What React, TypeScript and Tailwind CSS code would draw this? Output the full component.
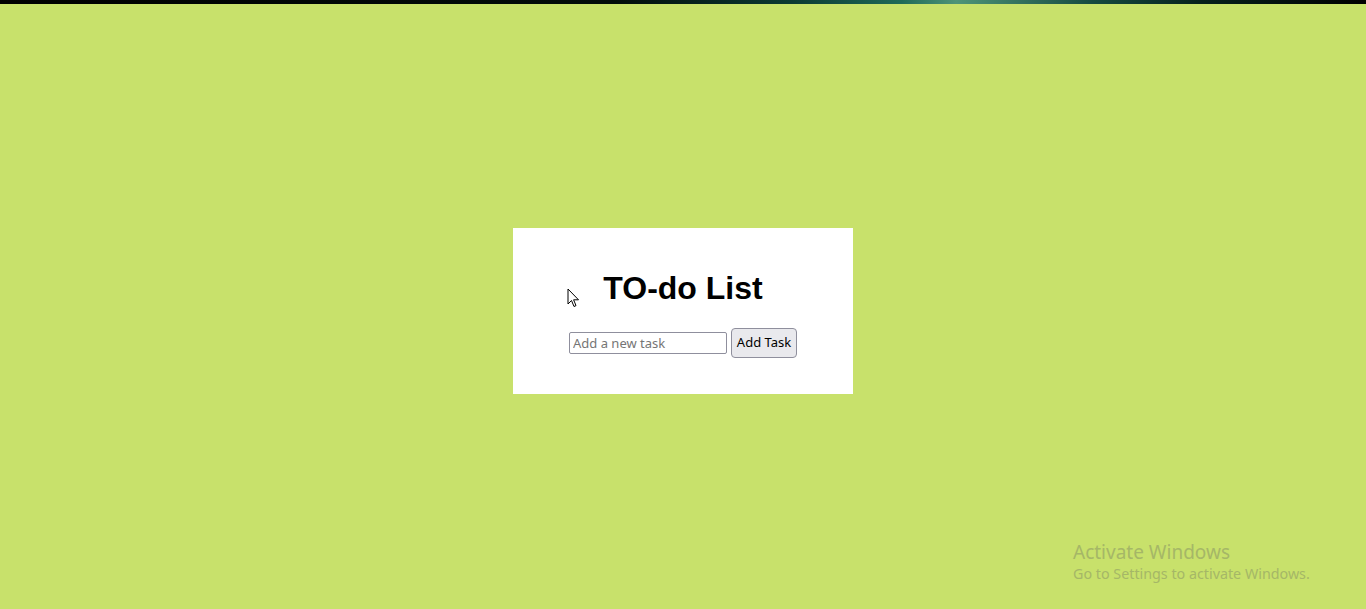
import { useState } from "react";

// Mouse pointer captured in the screenshot
const Pointer = () => (
  <svg width="13" height="20" viewBox="0 0 13 20" className="absolute left-[567px] top-[288px]">
    <path d="M1 1 L1 16 L4.5 12.5 L7 18.5 L9 17.6 L6.6 11.8 L11.5 11.8 Z" fill="#fff" stroke="#000" strokeWidth="1" strokeLinejoin="round" />
  </svg>
);

const App = () => {
  const [task, setTask] = useState("");
  const [tasks, setTasks] = useState<string[]>([]);

  const addTask = () => {
    if (!task.trim()) return;
    setTasks([...tasks, task.trim()]);
    setTask("");
  };

  return (
    <div className="relative flex h-[609px] w-full flex-col overflow-hidden bg-[#c8e16b] font-['Liberation_Sans',Arial,sans-serif]">
      {/* dark strip at the top of the page */}
      <div className="h-1 w-full bg-[linear-gradient(90deg,#000_0%,#020c0a_45%,#0c3a33_58%,#1f6a58_66%,#4e9478_70%,#164a40_80%,#06201c_88%,#000_100%)]" />

      <main className="flex flex-1 items-center justify-center pt-[9px]">
        <div className="flex h-[166px] w-[340px] flex-col items-center bg-white pt-[42px]">
          <h1 className="text-[32px] font-bold leading-[37px] text-black">TO-do List</h1>
          <div className="mt-[21px] flex items-center gap-1">
            <input
              type="text"
              value={task}
              onChange={(e) => setTask(e.target.value)}
              placeholder="Add a new task"
              className="h-[22px] w-[158px] rounded-[2px] border border-[#8f8f9d] px-[3px] font-['Noto_Sans',sans-serif] text-[13px] text-black outline-none placeholder:text-[#757575]"
            />
            <button
              onClick={addTask}
              className="h-[30px] w-[66px] rounded-[4px] border border-[#8f8f9d] bg-[#e9e9ed] font-['Noto_Sans',sans-serif] text-[13px] text-black"
            >
              Add Task
            </button>
          </div>
          {tasks.length > 0 && (
            <ul className="mt-2 text-sm">
              {tasks.map((t, i) => (
                <li key={i}>{t}</li>
              ))}
            </ul>
          )}
        </div>
      </main>

      <Pointer />

      {/* OS watermark overlay */}
      <div className="pointer-events-none absolute left-[1073px] top-[540px] font-['Noto_Sans',sans-serif] text-[#a5b767]">
        <div className="text-[19px] leading-[24px]">Activate Windows</div>
        <div className="text-[14.3px] leading-[20px]">Go to Settings to activate Windows.</div>
      </div>
    </div>
  );
};

export default App;
